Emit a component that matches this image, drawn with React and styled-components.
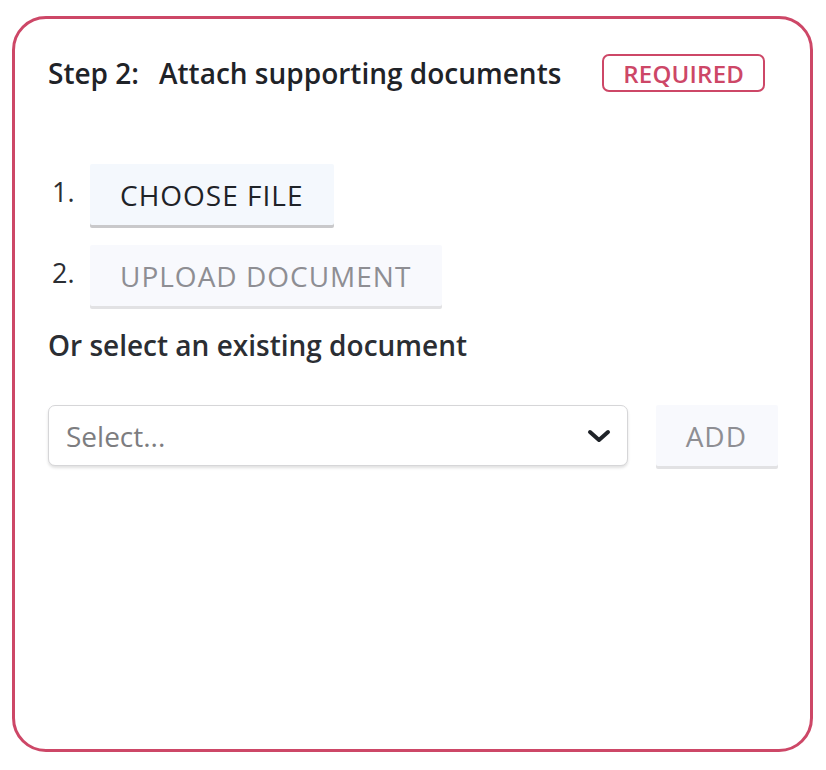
import React from "react";
import styled, { createGlobalStyle } from "styled-components";

const GlobalStyle = createGlobalStyle`
  body {
    margin: 0;
    background: #ffffff;
    font-family: "Open Sans", "Liberation Sans", sans-serif;
  }
`;

const App = () => {
  return (
    <>
      <GlobalStyle />
      <Card>
        <Header>
          <Title>
            <StepLabel>Step 2:</StepLabel>
            Attach supporting documents
          </Title>
          <Badge>REQUIRED</Badge>
        </Header>

        <Steps>
          <StepRow>
            <StepNumber>1.</StepNumber>
            <ActionButton>CHOOSE FILE</ActionButton>
          </StepRow>
          <StepRow>
            <StepNumber>2.</StepNumber>
            <ActionButton disabled>UPLOAD DOCUMENT</ActionButton>
          </StepRow>
        </Steps>

        <Subtitle>Or select an existing document</Subtitle>

        <SelectRow>
          <SelectBox>
            <Placeholder>Select...</Placeholder>
            <svg width="24" height="14" viewBox="0 0 24 14" fill="none">
              <path
                d="M3 3l9 8 9-8"
                stroke="#1f2328"
                strokeWidth="4"
                strokeLinecap="round"
                strokeLinejoin="round"
              />
            </svg>
          </SelectBox>
          <ActionButton disabled>ADD</ActionButton>
        </SelectRow>
      </Card>
    </>
  );
};

const Card = styled.div`
  box-sizing: border-box;
  width: 801px;
  height: 736px;
  margin: 16px 0 0 12px;
  padding: 35px 32px 32px 33px;
  border: 3px solid #cd4767;
  border-radius: 34px;
  background: #ffffff;
  display: flex;
  flex-direction: column;
`;

const Header = styled.div`
  display: flex;
  align-items: center;
  gap: 41px;
`;

const Title = styled.h2`
  margin: 0;
  font-size: 28px;
  font-weight: 600;
  line-height: 38px;
  color: #1f2328;
`;

const StepLabel = styled.span`
  margin-right: 20px;
`;

const Badge = styled.span`
  box-sizing: border-box;
  height: 38px;
  padding: 0 19px;
  display: inline-flex;
  align-items: center;
  border: 2px solid #cd4767;
  border-radius: 7px;
  color: #cd4767;
  font-size: 24px;
  font-weight: 600;
  letter-spacing: 0.2px;
`;

const Steps = styled.div`
  margin-top: 72px;
  display: flex;
  flex-direction: column;
  gap: 20px;
`;

const StepRow = styled.div`
  display: flex;
  align-items: flex-start;
`;

const StepNumber = styled.span`
  box-sizing: border-box;
  width: 42px;
  padding: 11px 0 0 4px;
  font-size: 27px;
  line-height: 34px;
  color: #2b2e33;
`;

const ActionButton = styled.button`
  box-sizing: border-box;
  height: 61px;
  padding: 0 31px 0 30px;
  border: none;
  border-radius: 2px;
  background: ${(p) => (p.disabled ? "#f8f9fd" : "#f4f8fd")};
  box-shadow: 0 3px 0 ${(p) => (p.disabled ? "#e2e2e4" : "#c9c9cb")};
  color: ${(p) => (p.disabled ? "#8e8e93" : "#1f2328")};
  font-family: "Open Sans", "Liberation Sans", sans-serif;
  font-size: 28px;
  letter-spacing: 1px;
  cursor: ${(p) => (p.disabled ? "default" : "pointer")};
  flex-shrink: 0;
`;

const Subtitle = styled.h3`
  margin: 20px 0 0;
  font-size: 28px;
  font-weight: 600;
  line-height: 38px;
  color: #2b2e33;
`;

const SelectRow = styled.div`
  margin-top: 41px;
  display: flex;
  align-items: center;
  gap: 28px;
`;

const SelectBox = styled.div`
  box-sizing: border-box;
  flex: 1;
  height: 61px;
  padding: 0 16px 0 17px;
  display: flex;
  align-items: center;
  justify-content: space-between;
  border: 1px solid #d6d6d8;
  border-radius: 7px;
  background: #ffffff;
  box-shadow: 0 2px 3px rgba(0, 0, 0, 0.12);
`;

const Placeholder = styled.span`
  font-size: 28px;
  color: #7d7d80;
`;

export default App;
